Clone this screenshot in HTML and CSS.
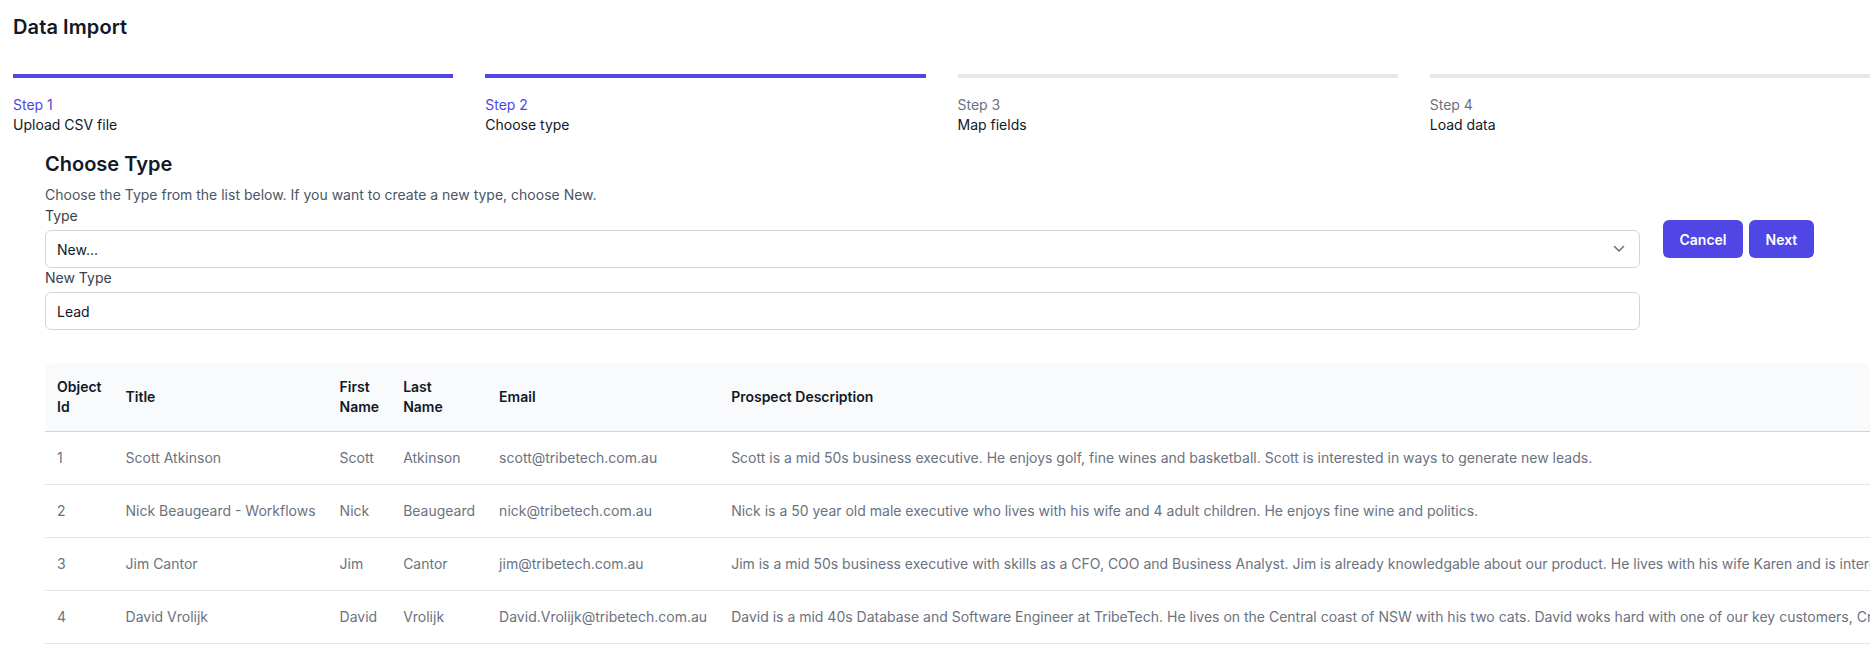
FILE: index.html
```html
<!DOCTYPE html>
<html lang="en">
<head>
<meta charset="utf-8">
<title>Data Import</title>
<link rel="stylesheet" href="styles.css">
</head>
<body>
<div class="page">
  <h1 class="page-title">Data Import</h1>

  <ol class="steps">
    <li class="step done">
      <span class="step-num">Step 1</span>
      <span class="step-name">Upload CSV file</span>
    </li>
    <li class="step done">
      <span class="step-num">Step 2</span>
      <span class="step-name">Choose type</span>
    </li>
    <li class="step">
      <span class="step-num">Step 3</span>
      <span class="step-name">Map fields</span>
    </li>
    <li class="step">
      <span class="step-num">Step 4</span>
      <span class="step-name">Load data</span>
    </li>
  </ol>

  <section class="content">
    <h2 class="section-title">Choose Type</h2>
    <p class="section-desc">Choose the Type from the list below. If you want to create a new type, choose New.</p>

    <div class="form-row">
      <div class="form-fields">
        <label class="field-label">Type</label>
        <div class="select">
          <span class="select-value">New...</span>
          <svg class="chevron" width="12" height="8" viewBox="0 0 12 8" aria-hidden="true">
            <path d="M1.5 1.5 L6 6 L10.5 1.5" fill="none" stroke="#6b7280" stroke-width="1.6" stroke-linecap="round" stroke-linejoin="round"/>
          </svg>
        </div>
        <label class="field-label">New Type</label>
        <div class="input">Lead</div>
      </div>
      <div class="form-actions">
        <button class="btn">Cancel</button>
        <button class="btn">Next</button>
      </div>
    </div>

    <div class="table-wrap">
      <table class="data-table">
        <thead>
          <tr>
            <th>Object Id</th>
            <th>Title</th>
            <th>First Name</th>
            <th class="stack">Last Name</th>
            <th>Email</th>
            <th class="wide">Prospect Description</th>
          </tr>
        </thead>
        <tbody>
          <tr>
            <td>1</td>
            <td>Scott Atkinson</td>
            <td>Scott</td>
            <td>Atkinson</td>
            <td>scott@tribetech.com.au</td>
            <td class="wide">Scott is a mid 50s business executive. He enjoys golf, fine wines and basketball. Scott is interested in ways to generate new leads.</td>
          </tr>
          <tr>
            <td>2</td>
            <td>Nick Beaugeard - Workflows</td>
            <td>Nick</td>
            <td>Beaugeard</td>
            <td>nick@tribetech.com.au</td>
            <td class="wide">Nick is a 50 year old male executive who lives with his wife and 4 adult children. He enjoys fine wine and politics.</td>
          </tr>
          <tr>
            <td>3</td>
            <td>Jim Cantor</td>
            <td>Jim</td>
            <td>Cantor</td>
            <td>jim@tribetech.com.au</td>
            <td class="wide">Jim is a mid 50s business executive with skills as a CFO, COO and Business Analyst. Jim is already knowledgable about our product. He lives with his wife Karen and is interested in automating his business processes.</td>
          </tr>
          <tr>
            <td>4</td>
            <td>David Vrolijk</td>
            <td>David</td>
            <td>Vrolijk</td>
            <td>David.Vrolijk@tribetech.com.au</td>
            <td class="wide">David is a mid 40s Database and Software Engineer at TribeTech. He lives on the Central coast of NSW with his two cats. David woks hard with one of our key customers, Crown Resorts.</td>
          </tr>
        </tbody>
      </table>
    </div>
  </section>
</div>
</body>
</html>
```

FILE: styles.css
```css
* {
  box-sizing: border-box;
}

html, body {
  margin: 0;
  padding: 0;
  background: #ffffff;
}

body {
  font-family: Inter, "Noto Sans", "Liberation Sans", sans-serif;
  color: #111827;
  overflow: hidden;
}

.page {
  padding: 13px 4px 0 13px;
}

.page-title {
  margin: 0;
  font-size: 20px;
  line-height: 28px;
  font-weight: 600;
  letter-spacing: 0.1px;
  color: #111827;
}

.steps {
  list-style: none;
  margin: 33px 0 0 0;
  padding: 0;
  display: grid;
  grid-template-columns: repeat(4, 1fr);
  column-gap: 32px;
}

.step {
  display: flex;
  flex-direction: column;
  border-top: 4px solid #e5e7eb;
  padding-top: 17px;
}

.step.done {
  border-top-color: #4f46e5;
}

.step-num {
  font-size: 14px;
  line-height: 20px;
  color: #6b7280;
}

.step.done .step-num {
  color: #4f46e5;
}

.step-name {
  font-size: 14px;
  line-height: 20px;
  color: #111827;
}

.content {
  margin: 15px 0 0 32px;
}

.section-title {
  margin: 0;
  font-size: 20px;
  line-height: 28px;
  font-weight: 600;
  color: #111827;
}

.section-desc {
  margin: 7px 0 1px 0;
  font-size: 14px;
  line-height: 20px;
  color: #4b5563;
}

.form-row {
  display: flex;
  align-items: flex-start;
  gap: 23px;
}

.form-fields {
  flex: 1;
  display: flex;
  flex-direction: column;
}

.field-label {
  font-size: 14px;
  line-height: 20px;
  color: #374151;
}

.select,
.input {
  height: 38px;
  border: 1px solid #d1d5db;
  border-radius: 6px;
  padding: 0 12px 0 11px;
  font-size: 14px;
  color: #111827;
  display: flex;
  align-items: center;
  margin: 4px 0 1px 0;
}

.select {
  justify-content: space-between;
  margin-bottom: 0;
}

.chevron {
  display: block;
  margin-right: 2px;
}

.form-actions {
  width: 207px;
  display: flex;
  gap: 6px;
  margin-top: 14px;
}

.btn {
  height: 38px;
  padding: 0 16.5px;
  border: none;
  border-radius: 6px;
  background: #4f46e5;
  color: #ffffff;
  font-family: inherit;
  font-size: 14px;
  font-weight: 600;
}

.table-wrap {
  margin-top: 32px;
  overflow: hidden;
  border-radius: 6px 6px 0 0;
}

.data-table {
  width: 100%;
  border-collapse: collapse;
  font-size: 14px;
  line-height: 20px;
}

.data-table thead tr {
  background: #f9fafb;
  border-bottom: 1px solid #d1d5db;
}

.data-table th {
  text-align: left;
  font-weight: 600;
  color: #111827;
  padding: 14px 12px;
  vertical-align: middle;
}

.data-table th.stack {
  word-spacing: 4px;
}

.data-table td {
  color: #6b7280;
  padding: 16px 12px;
  white-space: nowrap;
}

.data-table tbody tr {
  border-bottom: 1px solid #e5e7eb;
}

.data-table .wide {
  white-space: nowrap;
}
```
